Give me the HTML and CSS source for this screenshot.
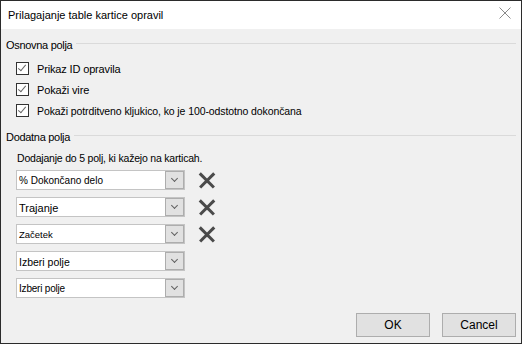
FILE: index.html
```html
<!DOCTYPE html>
<html lang="sl">

<head>
    <meta charset="UTF-8">
    <meta name="viewport" content="width=device-width, initial-scale=1.0">
    <title>Prilagajanje table kartice opravil</title>
    <link rel="stylesheet" href="styles.css">
</head>

<body>
    <div class="dialog">
        <div class="titlebar">
            <span class="title">Prilagajanje table kartice opravil</span>
            <button class="close-btn" aria-label="Zapri">
                <svg width="12" height="12" viewBox="0 0 12 12">
                    <path d="M0.5 0.5 L11.5 11.5 M11.5 0.5 L0.5 11.5" stroke="#8a8a8a" stroke-width="1" fill="none" />
                </svg>
            </button>
        </div>

        <div class="content">
            <div class="group-header">
                <span>Osnovna polja</span>
                <div class="group-line"></div>
            </div>
            <div class="check-list">
                <label class="check-row"><span class="box checked"></span>Prikaz ID opravila</label>
                <label class="check-row"><span class="box checked"></span>Pokaži vire</label>
                <label class="check-row small"><span class="box checked"></span>Pokaži potrditveno kljukico, ko je 100-odstotno dokončana</label>
            </div>

            <div class="group-header second">
                <span>Dodatna polja</span>
                <div class="group-line"></div>
            </div>
            <div class="hint">Dodajanje do 5 polj, ki kažejo na karticah.</div>

            <div class="field-list">
                <div class="field-row">
                    <div class="combo"><span class="combo-text t10">% Dokončano delo</span><span class="combo-btn"></span></div>
                    <span class="remove"></span>
                </div>
                <div class="field-row">
                    <div class="combo"><span class="combo-text">Trajanje</span><span class="combo-btn"></span></div>
                    <span class="remove"></span>
                </div>
                <div class="field-row">
                    <div class="combo"><span class="combo-text t9">Začetek</span><span class="combo-btn"></span></div>
                    <span class="remove"></span>
                </div>
                <div class="field-row">
                    <div class="combo"><span class="combo-text t105">Izberi polje</span><span class="combo-btn"></span></div>
                </div>
                <div class="field-row">
                    <div class="combo"><span class="combo-text t10 tight">Izberi polje</span><span class="combo-btn"></span></div>
                </div>
            </div>
        </div>

        <div class="footer">
            <button class="btn">OK</button>
            <button class="btn">Cancel</button>
        </div>
    </div>
</body>

</html>
```

FILE: styles.css
```css
body {
    margin: 0;
    padding: 0;
    font-family: 'Liberation Sans', Arial, sans-serif;
    font-size: 11px;
    color: #000;
}

.dialog {
    width: 522px;
    height: 344px;
    box-sizing: border-box;
    border: 1px solid #2b2b2b;
    background-color: #f0f0f0;
    display: flex;
    flex-direction: column;
}

.titlebar {
    height: 28px;
    background-color: #fff;
    display: flex;
    align-items: center;
    justify-content: space-between;
    padding-left: 7px;
    padding-right: 10px;
}

.title {
    font-size: 11px;
}

.close-btn {
    border: none;
    background: none;
    padding: 0;
    width: 12px;
    height: 12px;
    margin-bottom: 4px;
}

.close-btn svg {
    display: block;
}

.content {
    padding-left: 5px;
    padding-right: 5px;
}

.group-header {
    display: flex;
    align-items: center;
    height: 16px;
    margin-top: 8px;
    font-size: 11px;
    letter-spacing: -0.3px;
}

.group-header span {
    padding-right: 4px;
}

.group-line {
    flex: 1;
    height: 1px;
    background-color: #dadada;
    margin-bottom: 4px;
}

.check-list {
    margin-top: 5px;
    padding-left: 10px;
}

.check-row {
    display: flex;
    align-items: center;
    height: 21px;
    font-size: 11px;
    letter-spacing: -0.15px;
}

.check-row.small {
    font-size: 10.5px;
    letter-spacing: -0.1px;
}

.box {
    width: 11px;
    height: 11px;
    border: 1px solid #333;
    background-color: #fff;
    margin-right: 8px;
    position: relative;
}

.box.checked::after {
    content: "";
    position: absolute;
    left: 3px;
    top: 0px;
    width: 3px;
    height: 7px;
    border-right: 1.5px solid #666;
    border-bottom: 1.5px solid #666;
    transform: rotate(40deg);
}

.group-header.second {
    margin-top: 8px;
}

.hint {
    margin-top: 5px;
    height: 16px;
    line-height: 16px;
    padding-left: 11px;
    font-size: 10.5px;
    letter-spacing: -0.2px;
}

.field-list {
    margin-top: 4px;
    padding-left: 10px;
    display: flex;
    flex-direction: column;
    gap: 7px;
}

.field-row {
    display: flex;
    align-items: center;
    height: 20px;
}

.combo {
    width: 169px;
    height: 20px;
    box-sizing: border-box;
    border: 1px solid #c4c4c4;
    background-color: #fff;
    display: flex;
    align-items: center;
}

.combo-text {
    flex: 1;
    padding-left: 2px;
    padding-top: 1px;
    font-size: 11px;
}

.combo-text.t105 {
    font-size: 10.5px;
}

.combo-text.t10 {
    font-size: 10px;
}

.combo-text.t9 {
    font-size: 9.5px;
}

.combo-text.tight {
    letter-spacing: -0.2px;
}

.combo-btn {
    width: 19px;
    height: 18px;
    box-sizing: border-box;
    border: 1px solid #adadad;
    background-color: #e1e1e1;
    position: relative;
}

.combo-btn::after {
    content: "";
    position: absolute;
    left: 6px;
    top: 4px;
    width: 4px;
    height: 4px;
    border-right: 1px solid #606060;
    border-bottom: 1px solid #606060;
    transform: rotate(45deg);
}

.remove {
    width: 18px;
    height: 18px;
    margin-left: 13px;
    position: relative;
}

.remove::before,
.remove::after {
    content: "";
    position: absolute;
    left: -1px;
    top: 8px;
    width: 20px;
    height: 2.5px;
    background-color: #4a4a4a;
    transform: rotate(45deg);
}

.remove::after {
    transform: rotate(-45deg);
}

.footer {
    margin-top: auto;
    display: flex;
    justify-content: flex-end;
    gap: 12px;
    padding-right: 5px;
    padding-bottom: 6px;
}

.btn {
    width: 74px;
    height: 24px;
    border: 1px solid #adadad;
    background-color: #e1e1e1;
    font-family: 'Liberation Sans', Arial, sans-serif;
    font-size: 12px;
    color: #000;
    padding: 0;
}
```
